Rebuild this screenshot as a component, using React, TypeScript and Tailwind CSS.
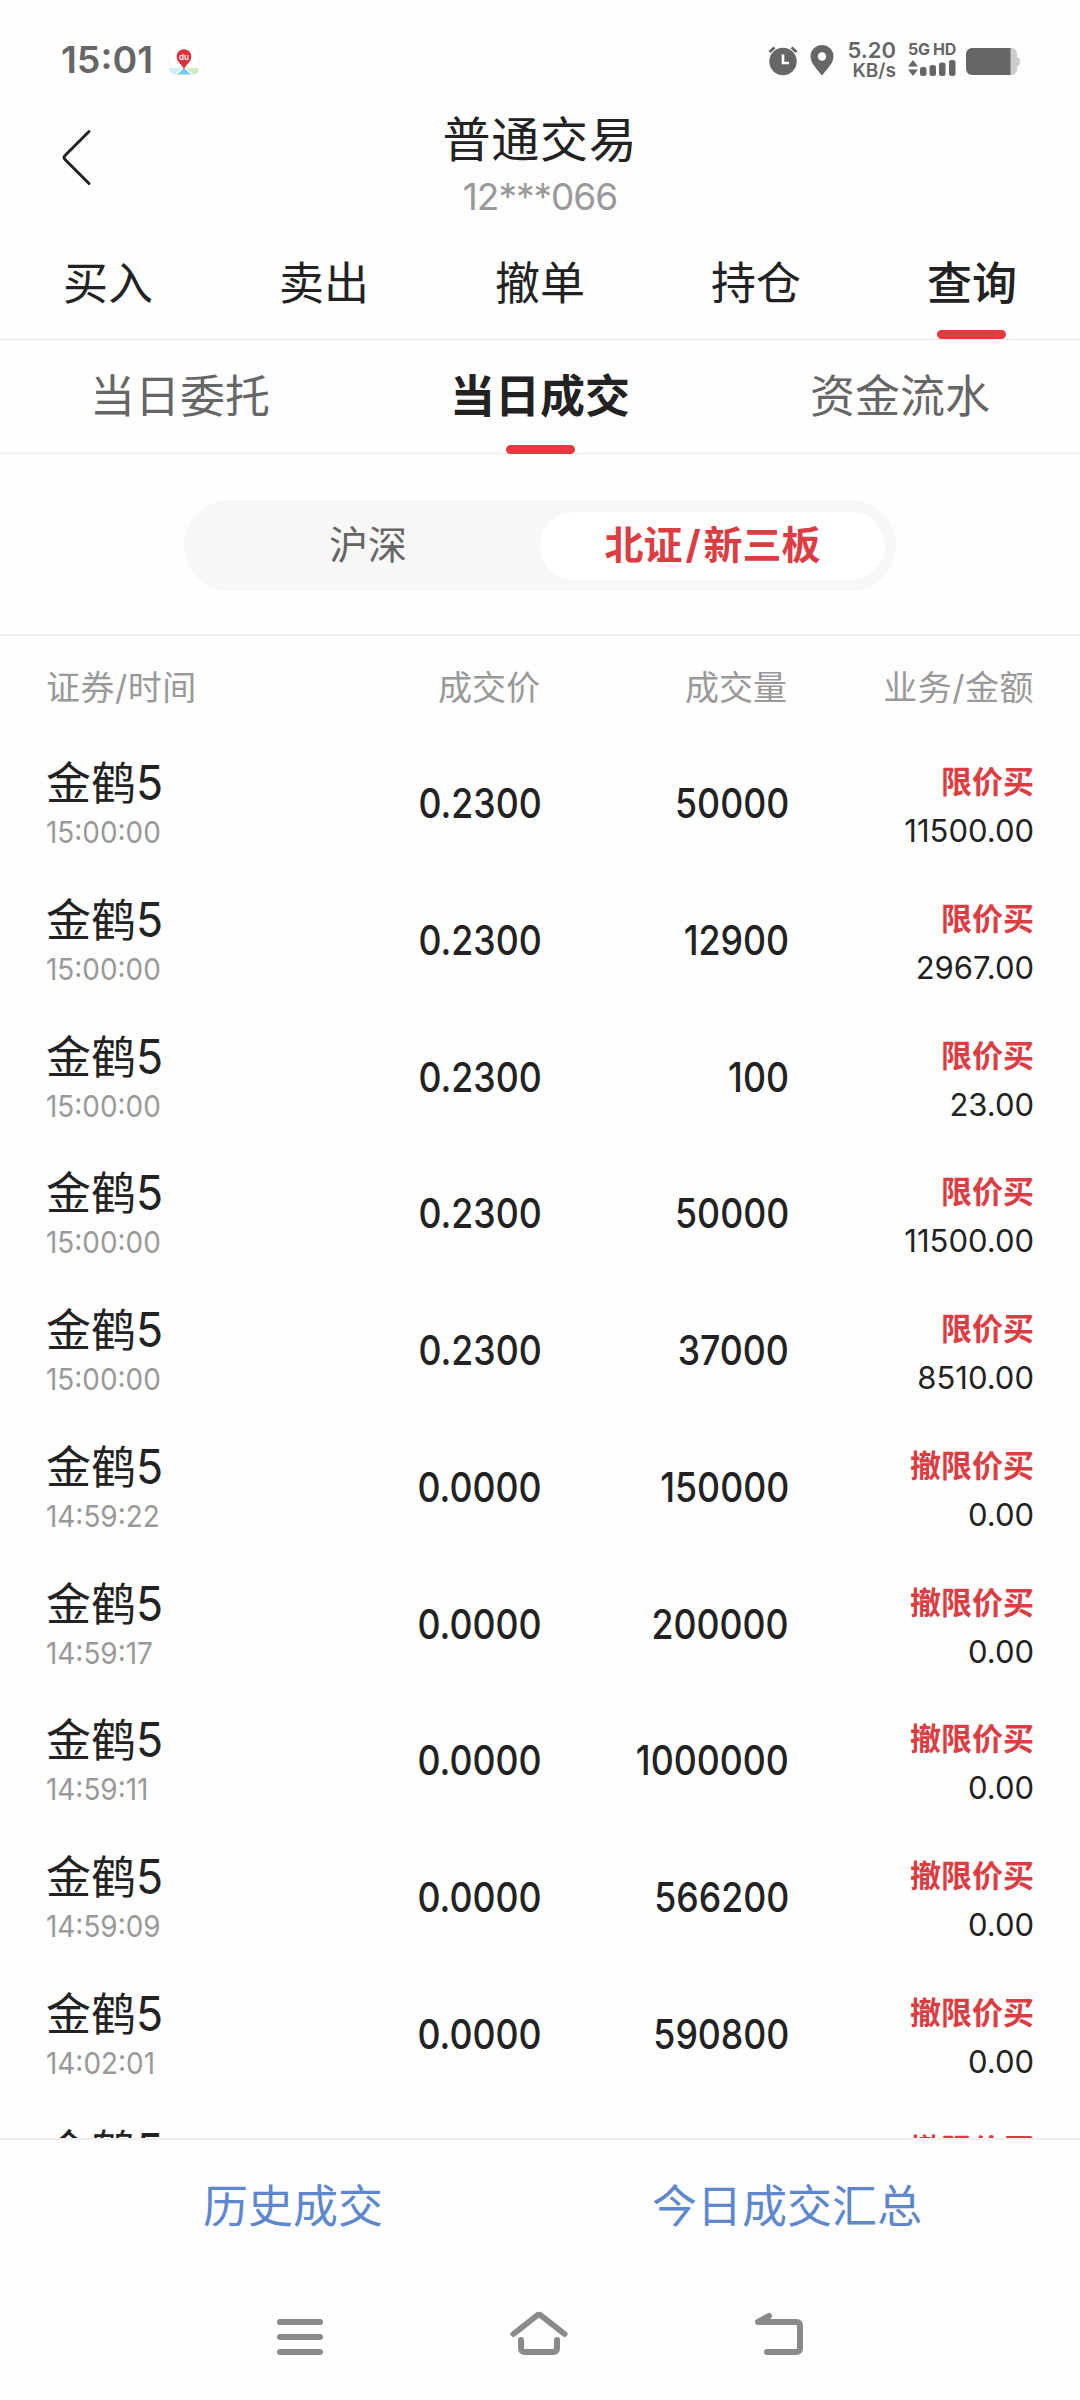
import React from "react";

type Trade = {
  time: string;
  price: string;
  volume: string;
  type: string;
  amount: string;
};

const trades: Trade[] = [
  { time: "15:00:00", price: "0.2300", volume: "50000", type: "限价买", amount: "11500.00" },
  { time: "15:00:00", price: "0.2300", volume: "12900", type: "限价买", amount: "2967.00" },
  { time: "15:00:00", price: "0.2300", volume: "100", type: "限价买", amount: "23.00" },
  { time: "15:00:00", price: "0.2300", volume: "50000", type: "限价买", amount: "11500.00" },
  { time: "15:00:00", price: "0.2300", volume: "37000", type: "限价买", amount: "8510.00" },
  { time: "14:59:22", price: "0.0000", volume: "150000", type: "撤限价买", amount: "0.00" },
  { time: "14:59:17", price: "0.0000", volume: "200000", type: "撤限价买", amount: "0.00" },
  { time: "14:59:11", price: "0.0000", volume: "1000000", type: "撤限价买", amount: "0.00" },
  { time: "14:59:09", price: "0.0000", volume: "566200", type: "撤限价买", amount: "0.00" },
  { time: "14:02:01", price: "0.0000", volume: "590800", type: "撤限价买", amount: "0.00" },
  { time: "", price: "", volume: "", type: "撤限价买", amount: "" },
];

const mainTabs = ["买入", "卖出", "撤单", "持仓", "查询"];
const subTabs = ["当日委托", "当日成交", "资金流水"];

const MapAppIcon = () => (
  <svg width="30" height="30" viewBox="0 0 30 30">
    <rect x="0.5" y="0.5" width="29" height="29" rx="5.5" fill="#fff" stroke="#f5f3f3" />
    <path d="M0.5 23h12L6 29.5a5.5 5.5 0 0 1-5.5-5z" fill="#cdeefa" />
    <path d="M15 23l7 6.5H8z" fill="#7cc8ee" />
    <path d="M17.5 23h12v1.500a5 5 0 0 1-5.500 5z" fill="#cdecbf" />
    <path d="M15 24.500c-1.200-4-7.300-7.500-7.300-13a7.300 7.300 0 0 1 14.600 0c0 5.500-6.100 9-7.300 13z" fill="#e0303a" />
    <text x="15" y="15" textAnchor="middle" fontSize="8" fontWeight="600" fill="#fff" fontFamily="Inter, sans-serif">
      du
    </text>
  </svg>
);

const StatusBar = () => (
  <div className="flex h-[92px] items-start justify-between bg-[#fefefe] pr-[60px] pl-[61px] text-[#666]">
    <div className="flex pt-[37px]">
      <span className="w-[108px] text-[37.5px] leading-[46px] font-semibold">15:01</span>
      <span className="pt-2">
        <MapAppIcon />
      </span>
    </div>
    <div className="flex pt-[40px]">
      <svg className="mt-[6px]" width="30" height="30" viewBox="0 0 30 30">
        <circle cx="15" cy="15.500" r="13.700" fill="#666" />
        <path d="M1.500 6l5-4.500M28.500 6l-5-4.500" stroke="#666" strokeWidth="3" />
        <path d="M15 8.500v8.500h6" fill="none" stroke="#fff" strokeWidth="2.600" />
      </svg>
      <svg className="mt-[5px] ml-[12px]" width="24" height="31" viewBox="0 0 24 31">
        <path d="M12 30.500C8 25 .5 18.500.5 11.500a11.500 11.500 0 0 1 23 0c0 7-7.500 13.500-11.500 19z" fill="#666" />
        <circle cx="12" cy="11.500" r="4.200" fill="#fff" />
      </svg>
      <div className="ml-[13px] flex w-[49px] flex-col items-end">
        <span className="text-[22px] leading-[21px] font-semibold">5.20</span>
        <span className="text-[19px] leading-[20px] font-semibold">KB/s</span>
      </div>
      <div className="ml-[12px] w-[49px]">
        <div className="text-[16px] leading-[18px] font-bold whitespace-nowrap tracking-[-0.3px]">5G HD</div>
        <svg className="mt-[1px]" width="48" height="18" viewBox="0 0 48 18">
          <path d="M5 1l5 6.500H0zM5 17l5-6.500H0z" fill="#666" />
          <rect x="12" y="8" width="6.500" height="9" rx="2.500" fill="#666" />
          <rect x="21.500" y="6" width="6.500" height="11" rx="2.500" fill="#666" />
          <rect x="31" y="3.500" width="6.500" height="13.500" rx="2.500" fill="#666" />
          <rect x="41" y="1" width="6.500" height="16" rx="2.500" fill="#666" />
        </svg>
      </div>
      <svg className="mt-[8px] ml-[9px]" width="54" height="27" viewBox="0 0 54 27">
        <path d="M42 0h4a5.500 5.500 0 0 1 5 5.500V8.500q3 1 3 5t-3 5V21.500a5.500 5.500 0 0 1-5 5.500h-4z" fill="#ccc" />
        <path d="M6 0h38.500v27H6a6 6 0 0 1-6-6V6a6 6 0 0 1 6-6z" fill="#666" />
      </svg>
    </div>
  </div>
);

const Header = () => (
  <div className="grid h-[136px] grid-cols-[1fr_auto_1fr] bg-[#fdfdfd]">
    <svg className="mt-[36px] ml-[60px]" width="34" height="60" viewBox="0 0 34 60">
      <path
        d="M29 3.500L5 27.500q-2 2 0 4L29 55.500"
        fill="none"
        stroke="#222"
        strokeWidth="3"
        strokeLinecap="round"
      />
    </svg>
    <div className="flex flex-col items-center pt-[18px]">
      <h1 className="text-[48px] leading-[60px] tracking-[0.8px]">普通交易</h1>
      <span className="mt-[4px] text-[37px] leading-[46px] tracking-[-1px] text-[#999]">12***066</span>
    </div>
  </div>
);

const TradeRow = ({ trade }: { trade: Trade }) => (
  <div className="grid h-[136.77px] shrink-0 grid-cols-[296px_200px_247px_245px] pr-[46px] pl-[46px]">
    <div className="pt-[20px]">
      <div className="text-[45px] leading-[56px]">
        金鹤<span className="inline-block origin-left scale-x-[0.93] text-[48px] leading-[48px]">5</span>
      </div>
      <div className="mt-[2px] w-fit origin-left scale-x-[0.93] text-[30px] leading-[36px] text-[#999]">
        {trade.time}
      </div>
    </div>
    <div className="flex items-start justify-end pt-[41px]">
      <span className="origin-right scale-x-[0.87] text-[41px] leading-[52px] font-medium">{trade.price}</span>
    </div>
    <div className="flex items-start justify-end pt-[41px]">
      <span className="origin-right scale-x-[0.87] text-[41px] leading-[52px] font-medium">{trade.volume}</span>
    </div>
    <div className="flex flex-col items-end pt-[26px]">
      <span className="text-[31px] leading-[40px] font-bold text-[#dc3d43]">{trade.type}</span>
      <span className="mt-[10px] text-[31px] leading-[38px]">{trade.amount}</span>
    </div>
  </div>
);

const App: React.FC = () => {
  return (
    <div className="flex h-[2400px] w-[1080px] flex-col overflow-hidden bg-[#fefefe] font-['Inter','Noto_Sans_CJK_SC',sans-serif] text-[#222]">
      <StatusBar />
      <Header />

      <div className="grid h-[112px] grid-cols-5 border-b border-[#e5e5e5]">
        {mainTabs.map((tab, i) => (
          <div key={tab} className="flex flex-col items-center justify-between pt-[28px]">
            <span className={i === 4 ? "text-[45px] leading-[56px] font-medium" : "text-[45px] leading-[56px]"}>
              {tab}
            </span>
            {i === 4 && <span className="mr-[2px] h-[9px] w-[69px] rounded-full bg-[#e63a40]" />}
          </div>
        ))}
      </div>

      <div className="grid h-[114px] grid-cols-3 border-b border-[#ececec]">
        {subTabs.map((tab, i) => (
          <div key={tab} className="flex flex-col items-center justify-between pt-[29px]">
            <span
              className={
                i === 1 ? "text-[45px] leading-[56px] font-bold" : "text-[45px] leading-[56px] text-[#666]"
              }
            >
              {tab}
            </span>
            {i === 1 && <span className="-mb-px h-[9px] w-[69px] rounded-full bg-[#e63a40]" />}
          </div>
        ))}
      </div>

      <div className="flex h-[182px] justify-center border-b-2 border-[#f0f0f0] pt-[46px]">
        <div className="flex h-[91px] w-[712px] items-center rounded-full bg-[#f7f7f7] pr-[11px] text-[39px]">
          <div className="w-[356px] pl-[12px] text-center text-[#666]">沪深</div>
          <div className="flex h-[68px] w-[345px] items-center justify-center rounded-full bg-white font-bold text-[#dc3d43]">
            北证<span className="px-[3px]">/</span>新三板
          </div>
        </div>
      </div>

      <div className="grid h-[102px] grid-cols-[294px_200px_247px_247px] items-center pr-[45px] pl-[46px] text-[34px] text-[#999]">
        <span className="tracking-[0.5px]">证券/时间</span>
        <span className="text-right">成交价</span>
        <span className="text-right">成交量</span>
        <span className="text-right tracking-[0.5px]">业务/金额</span>
      </div>

      <div className="flex h-[1400px] shrink-0 flex-col overflow-hidden">
        <div className="-mt-[2px] flex flex-col">
          {trades.map((trade, i) => (
            <TradeRow key={i} trade={trade} />
          ))}
        </div>
      </div>

      <div className="flex h-[132px] shrink-0 items-center gap-[269px] border-t-2 border-[#eee] pt-[3px] pl-[203px] text-[45px] text-[#5f87cd]">
        <span>历史成交</span>
        <span>今日成交汇总</span>
      </div>

      <div className="flex h-[130px] items-start justify-center gap-[187px] pt-[39px]">
        <svg width="46" height="48" viewBox="0 0 46 48" stroke="#8a8a8a" strokeWidth="6" strokeLinecap="round">
          <path d="M3 13h40M3 28h40M3 43h40" />
        </svg>
        <svg
          width="58"
          height="48"
          viewBox="0 0 58 48"
          fill="none"
          stroke="#8a8a8a"
          strokeWidth="6"
          strokeLinecap="round"
          strokeLinejoin="round"
        >
          <path d="M3.500 25L27 6.500q2-1.500 4 0L54.500 25" />
          <path d="M11 31v8q0 4 4 4h28q4 0 4-4v-8" />
        </svg>
        <svg
          width="48"
          height="48"
          viewBox="0 0 48 48"
          fill="none"
          stroke="#8a8a8a"
          strokeWidth="6"
          strokeLinecap="round"
          strokeLinejoin="round"
        >
          <path d="M14 7L3 13h38q4 0 4 4v22q0 4-4 4H12" />
        </svg>
      </div>
    </div>
  );
};

export default App;
